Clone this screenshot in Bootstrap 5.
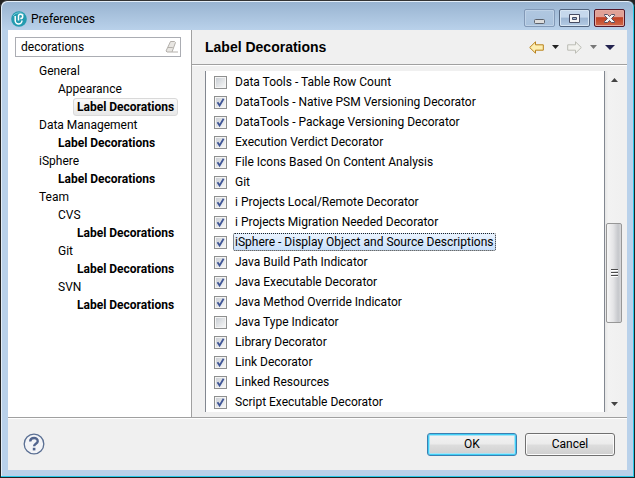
<!DOCTYPE html>
<html lang="en">
<head>
<meta charset="utf-8">
<meta name="viewport" content="width=device-width, initial-scale=1">
<title>Preferences</title>
<link rel="stylesheet" href="https://cdn.jsdelivr.net/npm/bootstrap@5.3.0/dist/css/bootstrap.min.css">
<style>
body { font: 12px/18px Roboto, "Open Sans", sans-serif; color: #000; background: #222; }
.win { border: 1px solid #222; border-top-color: #333; border-radius: 7px 7px 0 0; background: #b9d1ea; box-shadow: inset -1px -1px 0 #28c8e8, inset 1px 1px 0 #e4eef8; padding: 0 7px 7px; }
.titlebar { height: 28px; margin: 1px -6px 0; padding: 0 8px 0 9px; background: linear-gradient(#99b4d1, #b9d1ea); border-radius: 6px 6px 0 0; }
.caption { padding-top: 6px; }
.winbtn { width: 31px; height: 18px; padding: 0; border: 1px solid #52647e; border-radius: 2px; background: linear-gradient(#c6d8ec 45%, #9db6d3 50%, #b4cbe4); box-shadow: inset 0 0 0 1px #d7e5f3; }
.winbtn.dim { border-color: #8299b7; background: linear-gradient(#b0c7e0, #a9c2dd); box-shadow: inset 0 0 0 1px #bfd2e7; }
.winbtn.shut { border-color: #54182a; background: linear-gradient(#e0a196 42%, #c04023 48%, #d0694a); box-shadow: inset 0 0 0 1px #e5a99e; }
.client { background: #f0f0f0; }
.side { width: 184px; padding: 7px 10px 0 7px; background: #fff; border-right: 1px solid #a0a0a0; }
.filter { border: 1px solid #abadb3; height: 20px; padding: 0 2px 0 5px; }
.filter input { font-size: 12px; line-height: 16px; padding: 0; height: 16px; color: #000; }
.filter input:focus { box-shadow: none; }
.tree ul { padding-left: 19px; }
.tree > ul { padding: 5px 0 0 20px; }
.tree a { color: #000; text-decoration: none; padding: 0 4px; display: inline-block; white-space: nowrap; line-height: 18px; vertical-align: top; }
.tree .leaf { font-weight: 700; }
.tree .picked { line-height: 16px; padding: 0 3px; border: 1px solid #d9d9d9; border-radius: 3px; background: linear-gradient(#fafafa, #e8e8e8); }
.pagehead { height: 35px; padding: 0 12px 0 13px; border-bottom: 1px solid #a0a0a0; box-shadow: 0 1px 0 #fff; }
.pagehead h1 { font: bold 14px/18px "Liberation Sans", Arial, sans-serif; }
.toolbtn { border: 0; padding: 0; background: none; line-height: 0; }
.listwrap { margin: 6px 5px 5px 13px; border-left: 1px solid #828790; }
.items { background: #fff; padding: 1px 0 0 8px; overflow: hidden; border-right: 1px solid #828790; height: 341px; }
.item { height: 20px; gap: 6px; }
.item input { appearance: none; width: 13px; height: 13px; margin: 0; border: 1px solid #8e8f8f; background: linear-gradient(135deg, #c9ced4, #f6f6f6) center / 9px 9px no-repeat #f4f4f4; }
.item input:checked { background: url("data:image/svg+xml,%3Csvg xmlns='http://www.w3.org/2000/svg' viewBox='0 0 11 11'%3E%3Cpath d='M2.5 5.2 4.6 8.5 8.6 1.8' fill='none' stroke='%233f5596' stroke-width='1.8'/%3E%3C/svg%3E") center / 11px 11px no-repeat, linear-gradient(135deg, #ccd0d6, #f6f6f6) center / 9px 9px no-repeat #f4f4f4; }
.item label { padding: 0 1px; line-height: 16px; border: 1px solid transparent; white-space: nowrap; }
.item.picked label { border: 1px dotted #222; border-radius: 2px; background: linear-gradient(#eaf3fe, #c9e0fb); }
.scroll { width: 17px; padding-left: 1px; background: linear-gradient(90deg, #e6e6e6, #f2f2f2 20%, #f0f0f0); }
.scroll button { height: 17px; padding: 0; border: 0; background: none; line-height: 0; }
.before { flex: 136 0 0; }
.thumb { flex: 99 0 0; border: 1px solid #979797; border-radius: 2px; background: linear-gradient(90deg, #f6f6f6, #e4e4e6 45%, #c5c7cb 80%, #d8d8da); }
.after { flex: 72 0 0; }
.foot { height: 53px; padding: 0 12px 0 15px; border-top: 1px solid #a0a0a0; box-shadow: inset 0 1px 0 #fff; }
.cmd { width: 90px; height: 23px; padding: 0; font-size: 12px; line-height: 18px; color: #000; border: 1px solid #707070; border-radius: 3px; background: linear-gradient(#f3f3f3, #ebebeb 48%, #dddddd 52%, #cfcfcf); box-shadow: inset 0 0 0 1px #fbfbfb; }
.cmd.main { border-color: #3c7fb1; box-shadow: inset 0 0 0 1px #41cff5, inset 0 0 0 2px #a8e2f6; }
</style>
<script src="https://cdn.jsdelivr.net/npm/bootstrap@5.3.0/dist/js/bootstrap.bundle.min.js"></script>
</head>
<body>
<div class="win vh-100 d-flex flex-column overflow-hidden">
  <header class="titlebar d-flex justify-content-between align-items-center flex-shrink-0">
    <div class="caption d-flex align-items-center gap-1">
      <svg width="16" height="16" viewBox="0 0 16 16" aria-hidden="true"><circle cx="8" cy="8" r="7.8" fill="#249bb0"/><path d="M2 5a7 7 0 0 1 11-1" stroke="#70c8d4" fill="none"/><path d="M4.200 5v4.500a3.400 3.400 0 0 0 6.800 0M7.500 9.500V5c0-1 .8-1.700 1.800-1.700 3.200 0 3.200 4.200 0 4.200" fill="none" stroke="#fff" stroke-width="1.500"/></svg>
      <span>Preferences</span>
    </div>
    <div class="d-flex pt-1">
      <button class="winbtn dim" aria-label="Minimize"><svg class="d-block mx-auto" width="13" height="14" viewBox="0 0 13 14"><rect x="1.5" y="8.500" width="10" height="4" rx="1" fill="#ddd" stroke="#5c626c"/></svg></button>
      <button class="winbtn mx-1" aria-label="Maximize"><svg class="d-block mx-auto" width="13" height="14" viewBox="0 0 13 14"><path d="M1.500 3.500h10v8h-10zM4.500 6.500v2h4v-2z" fill="#f5f5f5" fill-rule="evenodd" stroke="#454b62"/></svg></button>
      <button class="winbtn shut" aria-label="Close"><svg class="d-block mx-auto" width="13" height="14" viewBox="0 0 13 14"><path d="M1.500 3.500h3l2 2 2-2h3v1l-3 3 3 3v1h-3l-2-2-2 2h-3v-1l3-3-3-3z" fill="#f5f5f5" stroke="#565264"/></svg></button>
    </div>
  </header>
  <div class="client flex-grow-1 d-flex flex-column">
    <div class="d-flex flex-grow-1">
      <aside class="side flex-shrink-0">
        <div class="filter d-flex align-items-center">
          <input class="form-control border-0 rounded-0 bg-transparent" type="text" value="decorations" aria-label="Filter">
          <button class="toolbtn" aria-label="Clear"><svg width="14" height="14" viewBox="0 0 14 14"><path d="M6.500 1.500h4l1 1-3.500 9.500H3l-1-1zM4 7.500h4.500l1 .5M8 12h6" fill="#e8e6e2" stroke="#b4b0ab"/></svg></button>
        </div>
        <nav class="tree" aria-label="Pages">
          <ul class="list-unstyled mb-0">
            <li><a href="#">General</a>
              <ul class="list-unstyled"><li><a href="#">Appearance</a>
                <ul class="list-unstyled"><li><a class="leaf picked" href="#">Label Decorations</a></li></ul></li></ul></li>
            <li><a href="#">Data Management</a>
              <ul class="list-unstyled"><li><a class="leaf" href="#">Label Decorations</a></li></ul></li>
            <li><a href="#">iSphere</a>
              <ul class="list-unstyled"><li><a class="leaf" href="#">Label Decorations</a></li></ul></li>
            <li><a href="#">Team</a>
              <ul class="list-unstyled">
                <li><a href="#">CVS</a><ul class="list-unstyled"><li><a class="leaf" href="#">Label Decorations</a></li></ul></li>
                <li><a href="#">Git</a><ul class="list-unstyled"><li><a class="leaf" href="#">Label Decorations</a></li></ul></li>
                <li><a href="#">SVN</a><ul class="list-unstyled"><li><a class="leaf" href="#">Label Decorations</a></li></ul></li>
              </ul></li>
          </ul>
        </nav>
      </aside>
      <main class="flex-grow-1 d-flex flex-column">
        <div class="pagehead d-flex align-items-center justify-content-between">
          <h1 class="m-0">Label Decorations</h1>
          <div class="d-flex align-items-center gap-2">
            <button class="toolbtn" aria-label="Back"><svg width="15" height="13" viewBox="0 0 15 13"><path d="M.7 6.500 6.500.8v3h7.800v5.400H6.500v3z" fill="#fdeeb0" stroke="#b8811c"/></svg></button>
            <button class="toolbtn" aria-label="Back history"><svg width="7" height="4" viewBox="0 0 7 4"><path d="M0 0h7L3.500 4z" fill="#222"/></svg></button>
            <button class="toolbtn" aria-label="Forward"><svg width="15" height="13" viewBox="0 0 15 13"><path d="M14.300 6.500 8.500.8v3H.7v5.400h7.800v3z" fill="#f2f2ee" stroke="#bbbcb4"/></svg></button>
            <button class="toolbtn" aria-label="Forward history"><svg width="7" height="4" viewBox="0 0 7 4"><path d="M0 0h7L3.500 4z" fill="#777"/></svg></button>
            <button class="toolbtn" aria-label="Menu"><svg width="10" height="5" viewBox="0 0 10 5"><path d="M0 0h10L5 5z" fill="#23234f"/></svg></button>
          </div>
        </div>
        <div class="listwrap flex-grow-1 d-flex">
          <div class="items flex-grow-1">
            <div class="item d-flex align-items-center"><input type="checkbox" id="d1"><label for="d1">Data Tools - Table Row Count</label></div>
            <div class="item d-flex align-items-center"><input type="checkbox" id="d2" checked><label for="d2">DataTools - Native PSM Versioning Decorator</label></div>
            <div class="item d-flex align-items-center"><input type="checkbox" id="d3" checked><label for="d3">DataTools - Package Versioning Decorator</label></div>
            <div class="item d-flex align-items-center"><input type="checkbox" id="d4" checked><label for="d4">Execution Verdict Decorator</label></div>
            <div class="item d-flex align-items-center"><input type="checkbox" id="d5" checked><label for="d5">File Icons Based On Content Analysis</label></div>
            <div class="item d-flex align-items-center"><input type="checkbox" id="d6" checked><label for="d6">Git</label></div>
            <div class="item d-flex align-items-center"><input type="checkbox" id="d7" checked><label for="d7">i Projects Local/Remote Decorator</label></div>
            <div class="item d-flex align-items-center"><input type="checkbox" id="d8" checked><label for="d8">i Projects Migration Needed Decorator</label></div>
            <div class="item picked d-flex align-items-center"><input type="checkbox" id="d9" checked><label for="d9">iSphere - Display Object and Source Descriptions</label></div>
            <div class="item d-flex align-items-center"><input type="checkbox" id="d10" checked><label for="d10">Java Build Path Indicator</label></div>
            <div class="item d-flex align-items-center"><input type="checkbox" id="d11" checked><label for="d11">Java Executable Decorator</label></div>
            <div class="item d-flex align-items-center"><input type="checkbox" id="d12" checked><label for="d12">Java Method Override Indicator</label></div>
            <div class="item d-flex align-items-center"><input type="checkbox" id="d13"><label for="d13">Java Type Indicator</label></div>
            <div class="item d-flex align-items-center"><input type="checkbox" id="d14" checked><label for="d14">Library Decorator</label></div>
            <div class="item d-flex align-items-center"><input type="checkbox" id="d15" checked><label for="d15">Link Decorator</label></div>
            <div class="item d-flex align-items-center"><input type="checkbox" id="d16" checked><label for="d16">Linked Resources</label></div>
            <div class="item d-flex align-items-center"><input type="checkbox" id="d17" checked><label for="d17">Script Executable Decorator</label></div>
          </div>
          <div class="scroll d-flex flex-column flex-shrink-0">
            <button aria-label="Scroll up"><svg width="7" height="4" viewBox="0 0 7 4"><path d="M0 4h7L3.500 0z" fill="#444"/></svg></button>
            <div class="before"></div>
            <div class="thumb d-flex align-items-center justify-content-center"><svg width="7" height="9" viewBox="0 0 7 9"><path d="M0 1.500h7M0 4.500h7M0 7.500h7" stroke="#fff"/><path d="M0 .5h7M0 3.500h7M0 6.500h7" stroke="#4c4c4c"/></svg></div>
            <div class="after"></div>
            <button aria-label="Scroll down"><svg width="7" height="4" viewBox="0 0 7 4"><path d="M0 0h7L3.500 4z" fill="#444"/></svg></button>
          </div>
        </div>
      </main>
    </div>
    <footer class="foot d-flex align-items-center justify-content-between flex-shrink-0">
      <button class="toolbtn" aria-label="Help"><svg width="22" height="22" viewBox="0 0 22 22"><circle cx="11" cy="11" r="9.800" fill="#f3f4f7" stroke="#5a6f93" stroke-width="1.300"/><path d="M7.200 8.500C7.400 3.800 15 4 14.700 8.300c-.2 2.500-3.600 2.500-3.600 5" fill="none" stroke="#52658e" stroke-width="2.400"/><rect x="9.800" y="14.800" width="2.600" height="2.600" fill="#52658e"/></svg></button>
      <div class="d-flex">
        <button class="cmd main me-2">OK</button>
        <button class="cmd">Cancel</button>
      </div>
    </footer>
  </div>
</div>
</body>
</html>
